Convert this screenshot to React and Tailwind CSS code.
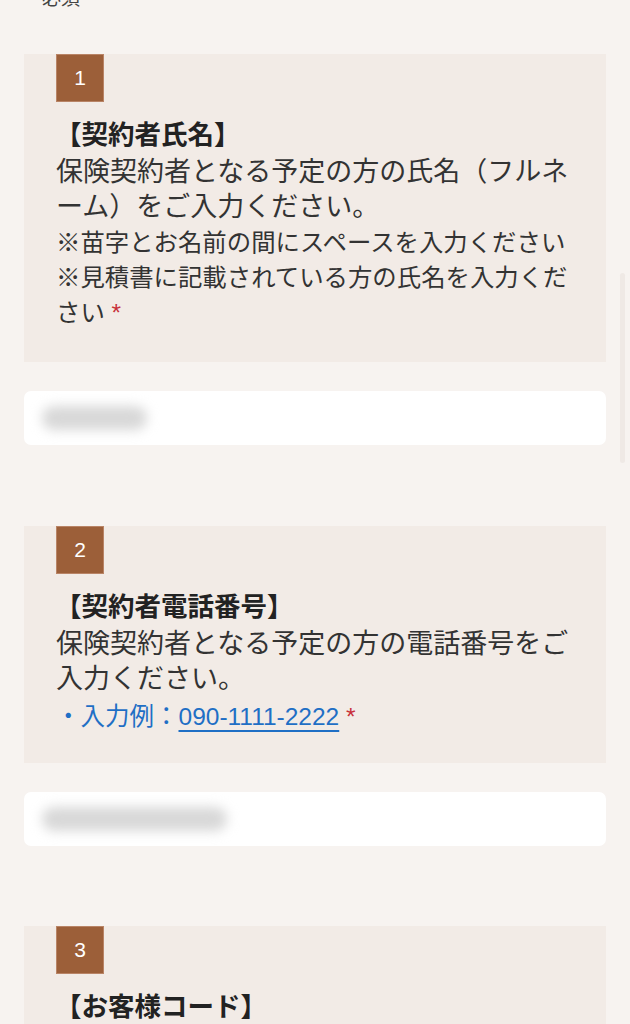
import React from "react";

const jp = { fontFamily: '"Liberation Sans", "Noto Sans CJK JP", sans-serif' };

function Badge({ n }) {
  return (
    <div className="w-[48px] h-[48px] bg-[#9c5f39] flex items-center justify-center text-white text-[21px] border border-[#b98466]">
      {n}
    </div>
  );
}

function Card({ n, title, tight, children }) {
  return (
    <div className={tight ? "bg-[#f2ebe6] px-[32px] pb-[29px]" : "bg-[#f2ebe6] px-[32px] pb-[32px]"}>
      <Badge n={n} />
      <div className="mt-[16px] mb-[2px] text-[26.5px] leading-[35px] font-bold text-[#222222] -ml-[1px]">{title}</div>
      {children}
    </div>
  );
}

function Input({ blobWidth }) {
  return (
    <div className="bg-white rounded-[7px] h-[54px] flex items-center px-[18px]">
      <div className="h-[24px] rounded-full bg-[#d8d8d8] blur-[6px]" style={{ width: blobWidth }} />
    </div>
  );
}

export default function App() {
  return (
    <div className="relative min-h-[1024px] bg-[#f7f3f0] overflow-hidden text-[#333333]" style={jp}>
      <div className="h-[54px] px-[42px] flex flex-col">
        <div className="-mt-[11px] leading-[20px] text-[19px] text-[#444444]">必須</div>
      </div>
      <div className="px-[24px] w-[630px]">
        <Card n="1" title="【契約者氏名】">
          <div className="text-[27px] leading-[35px] text-[#333333]">
            保険契約者となる予定の方の氏名（フルネーム）をご入力ください。
          </div>
          <div className="text-[24.4px] leading-[35px] text-[#333333]">※苗字とお名前の間にスペースを入力ください</div>
          <div className="text-[24.4px] leading-[35px] text-[#333333]">
            ※見積書に記載されている方の氏名を入力ください <span className="text-[#c8313a]">*</span>
          </div>
        </Card>
        <div className="mt-[29px]">
          <Input blobWidth="105px" />
        </div>
        <div className="mt-[81px]">
          <Card n="2" title="【契約者電話番号】" tight>
            <div className="text-[27px] leading-[35px] text-[#333333]">
              保険契約者となる予定の方の電話番号をご入力ください。
            </div>
            <div className="text-[24.5px] leading-[35px] text-[#1f6fc5] mt-[2px]">
              ・入力例：<span className="underline decoration-[2px] underline-offset-[5px]">090-1111-2222</span>{" "}
              <span className="text-[#c8313a]">*</span>
            </div>
          </Card>
        </div>
        <div className="mt-[29px]">
          <Input blobWidth="185px" />
        </div>
        <div className="mt-[80px]">
          <Card n="3" title="【お客様コード】">
            <div className="h-[40px]" />
          </Card>
        </div>
      </div>
      <div className="absolute left-[620px] top-[273px] w-[5px] h-[190px] rounded-full bg-[#efe9e5]" />
    </div>
  );
}
